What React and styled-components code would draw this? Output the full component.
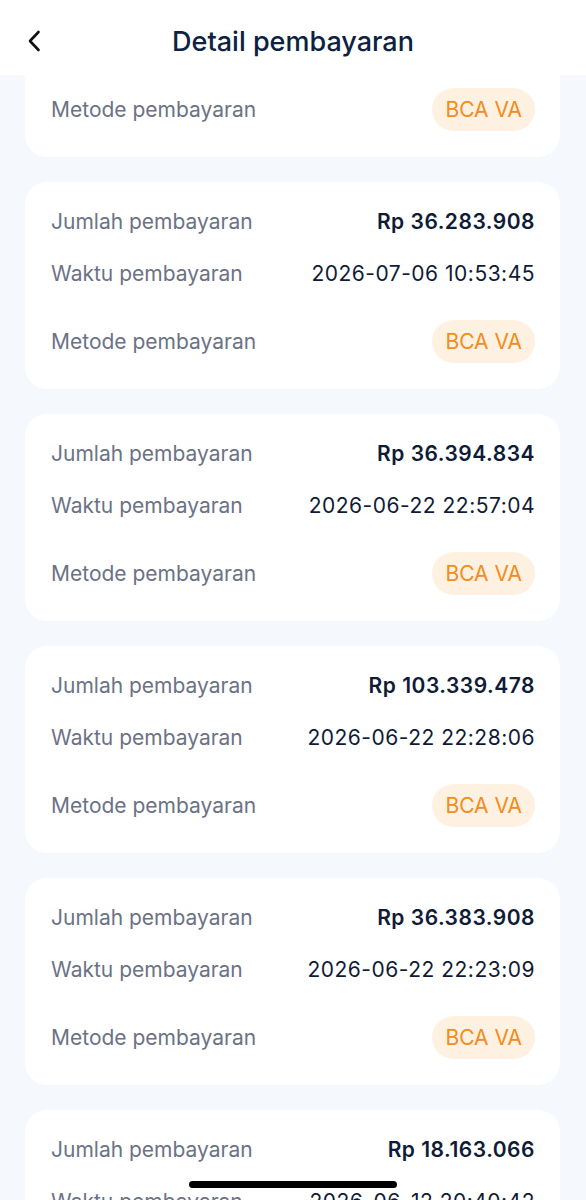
import styled, { createGlobalStyle } from "styled-components";

const GlobalStyle = createGlobalStyle`
  html, body {
    margin: 0;
    padding: 0;
    background: #f5f8fd;
    font-family: Inter, "Noto Sans", sans-serif;
  }
`;

// first entry is scrolled up under the header, only its method row shows
const payments = [
  { amount: "Rp 36.383.908", time: "2026-07-06 10:53:45", method: "BCA VA", partial: true },
  { amount: "Rp 36.283.908", time: "2026-07-06 10:53:45", method: "BCA VA" },
  { amount: "Rp 36.394.834", time: "2026-06-22 22:57:04", method: "BCA VA" },
  { amount: "Rp 103.339.478", time: "2026-06-22 22:28:06", method: "BCA VA" },
  { amount: "Rp 36.383.908", time: "2026-06-22 22:23:09", method: "BCA VA" },
  { amount: "Rp 18.163.066", time: "2026-06-12 20:40:42", method: "BCA VA" },
];

const Screen = styled.div`
  width: 586px;
  height: 1200px;
  display: flex;
  flex-direction: column;
  overflow: hidden;
  background: #f5f8fd;
`;

const Header = styled.header`
  height: 75px;
  box-sizing: border-box;
  padding-top: 7px;
  flex-shrink: 0;
  background: #ffffff;
  display: grid;
  grid-template-columns: 70px 1fr 70px;
  align-items: center;
`;

const BackButton = styled.button`
  border: 0;
  background: transparent;
  padding: 0 0 0 27px;
  height: 40px;
  display: flex;
  align-items: center;
  color: #111111;
  cursor: pointer;
`;

const Title = styled.h1`
  margin: 0;
  text-align: center;
  font-size: 27px;
  font-weight: 500;
  color: #0c2240;
`;

const Viewport = styled.main`
  flex: 1;
  overflow: hidden;
`;

const List = styled.div`
  display: flex;
  flex-direction: column;
  gap: 25px;
  padding: 0 26px 0 25px;
`;

const Card = styled.section`
  background: #ffffff;
  border-radius: ${(p) => (p.$partial ? "0 0 22px 22px" : "22px")};
  padding: ${(p) => (p.$partial ? "13px" : "22px")} 25px 26px 26px;
  display: flex;
  flex-direction: column;
`;

const Row = styled.div`
  display: flex;
  justify-content: space-between;
  align-items: center;
  height: ${(p) => (p.$tall ? "43px" : "34px")};
  margin-top: ${(p) => p.$gap || 0}px;
`;

const Label = styled.span`
  font-size: 21px;
  color: #6b7286;
  font-weight: 400;
`;

const Value = styled.span`
  font-size: 21px;
  letter-spacing: 0.5px;
  color: #0f1b37;
  font-weight: ${(p) => (p.$bold ? 600 : 400)};
`;

const Badge = styled.span`
  height: 43px;
  padding: 0 13px;
  border-radius: 22px;
  background: #fff1e1;
  color: #f28c1c;
  font-size: 21px;
  display: flex;
  align-items: center;
`;

const HomeIndicator = styled.div`
  position: fixed;
  left: 189px;
  top: 1181px;
  width: 208px;
  height: 7px;
  border-radius: 4px;
  background: #000000;
`;

const ChevronLeft = () => (
  <svg width="14" height="22" viewBox="0 0 14 22" fill="none">
    <path
      d="M11.5 2 L3 11 L11.5 20"
      stroke="currentColor"
      strokeWidth="2.6"
      strokeLinecap="round"
      strokeLinejoin="round"
    />
  </svg>
);

export default function App() {
  return (
    <>
      <GlobalStyle />
      <Screen>
        <Header>
          <BackButton aria-label="Kembali">
            <ChevronLeft />
          </BackButton>
          <Title>Detail pembayaran</Title>
          <span />
        </Header>
        <Viewport>
          <List>
            {payments.map((p, i) => (
              <Card key={i} $partial={p.partial}>
                {!p.partial && (
                  <>
                    <Row>
                      <Label>Jumlah pembayaran</Label>
                      <Value $bold>{p.amount}</Value>
                    </Row>
                    <Row $gap={18}>
                      <Label>Waktu pembayaran</Label>
                      <Value>{p.time}</Value>
                    </Row>
                  </>
                )}
                <Row $tall $gap={p.partial ? 0 : 30}>
                  <Label>Metode pembayaran</Label>
                  <Badge>{p.method}</Badge>
                </Row>
              </Card>
            ))}
          </List>
        </Viewport>
        <HomeIndicator />
      </Screen>
    </>
  );
}
